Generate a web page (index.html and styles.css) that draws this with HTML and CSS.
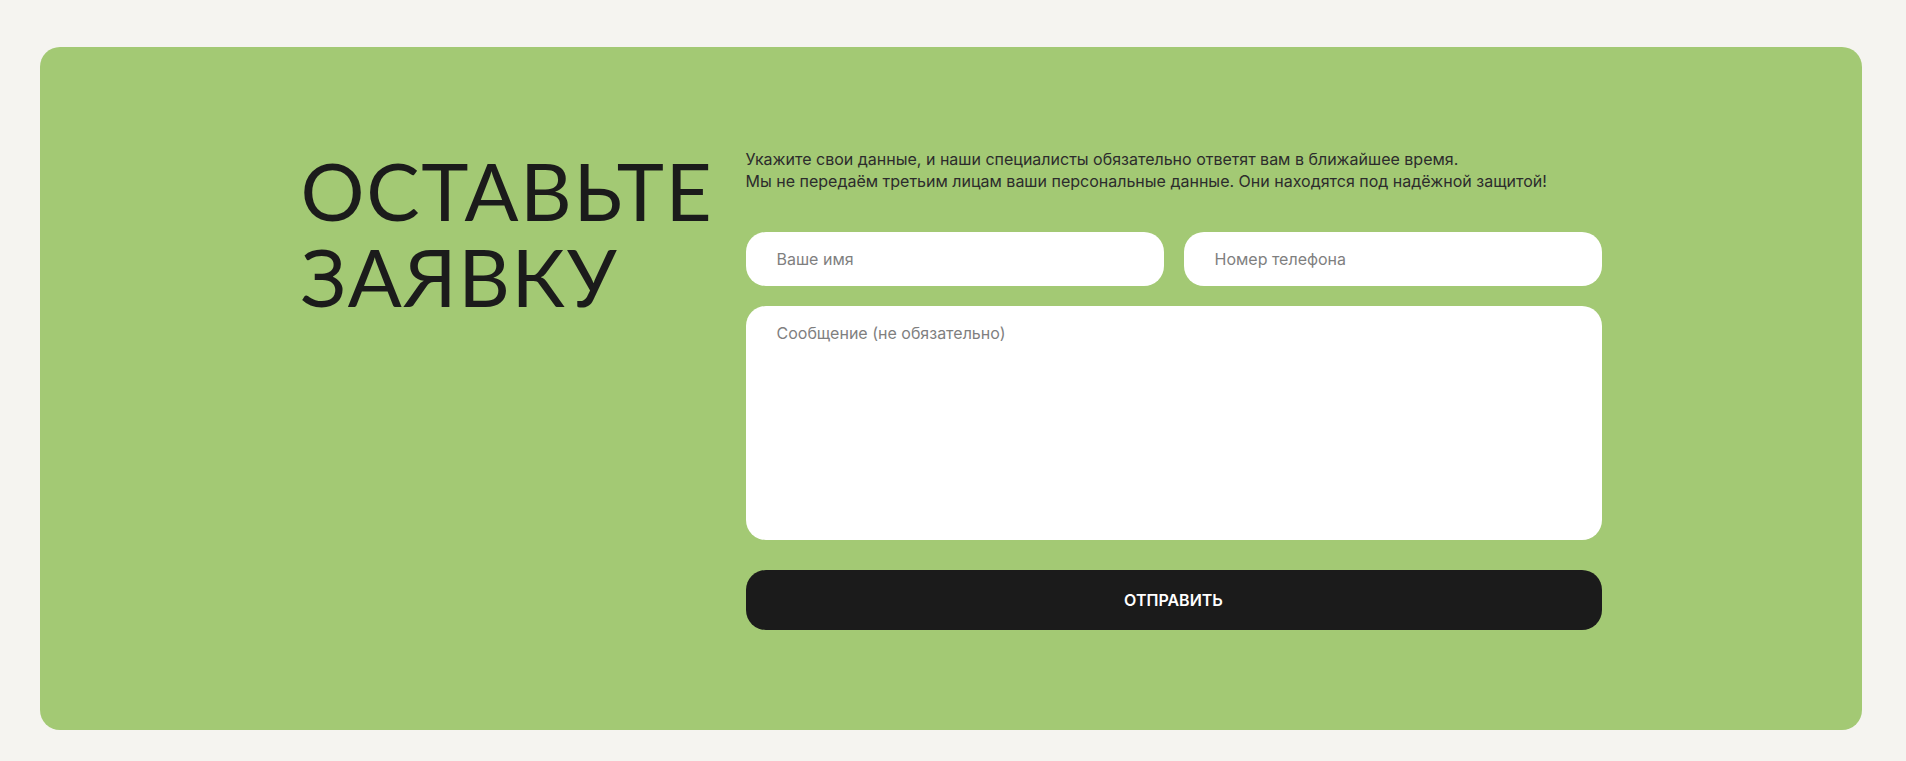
FILE: index.html
```html
<!DOCTYPE html>
<html lang="ru">
<head>
<meta charset="utf-8">
<title>Оставьте заявку</title>
<link rel="stylesheet" href="styles.css">
</head>
<body>
<section class="card">
  <div class="inner">
    <h2 class="title">ОСТАВЬТЕ<br>ЗАЯВКУ</h2>
    <form class="form">
      <p class="lead">Укажите свои данные, и наши специалисты обязательно ответят вам в ближайшее время.<br>Мы не передаём третьим лицам ваши персональные данные. Они находятся под надёжной защитой!</p>
      <div class="row">
        <input class="field" type="text" placeholder="Ваше имя">
        <input class="field" type="tel" placeholder="Номер телефона">
      </div>
      <textarea class="field area" placeholder="Сообщение (не обязательно)"></textarea>
      <button class="submit" type="button">ОТПРАВИТЬ</button>
    </form>
  </div>
</section>
</body>
</html>
```
FILE: styles.css
```css
* { box-sizing: border-box; }
html, body { margin: 0; padding: 0; }
body {
  background: #f5f4f0;
  font-family: "Inter", "Noto Sans", sans-serif;
  color: #1b1b1b;
  padding: 47px 44px 31px 40px;
}
.card {
  background: #a3c974;
  border-radius: 20px;
  padding: 101px 0 100px;
}
.inner {
  width: 1301px;
  margin: 0 auto;
  display: flex;
  justify-content: space-between;
  align-items: flex-start;
}
.title {
  margin: -1px 0 0;
  font-family: "Lato", "Noto Sans", sans-serif;
  font-weight: 400;
  font-size: 80px;
  line-height: 86px;
  letter-spacing: 1.6px;
  color: #1b1b1b;
}
.form {
  width: 856px;
  display: flex;
  flex-direction: column;
}
.lead {
  margin: 0 0 40px;
  font-size: 16px;
  line-height: 22px;
  color: #2c2c2c;
}
.row {
  display: flex;
  gap: 20px;
  margin-bottom: 20px;
}
.field {
  display: block;
  flex: 1;
  height: 54px;
  border: 0;
  outline: none;
  background: #fff;
  border-radius: 20px;
  padding: 0 31px;
  font-family: "Inter", "Noto Sans", sans-serif;
  font-size: 16px;
  color: #1b1b1b;
}
.field::placeholder { color: #7f7f7f; opacity: 1; }
.area {
  flex: none;
  width: 100%;
  height: 234px;
  padding: 17px 31px;
  resize: none;
}
.submit {
  margin-top: 30px;
  height: 60px;
  width: 100%;
  border: 0;
  border-radius: 20px;
  background: #1b1b1b;
  color: #fff;
  font-family: "Inter", "Noto Sans", sans-serif;
  font-weight: 600;
  font-size: 16px;
  cursor: pointer;
}
```
